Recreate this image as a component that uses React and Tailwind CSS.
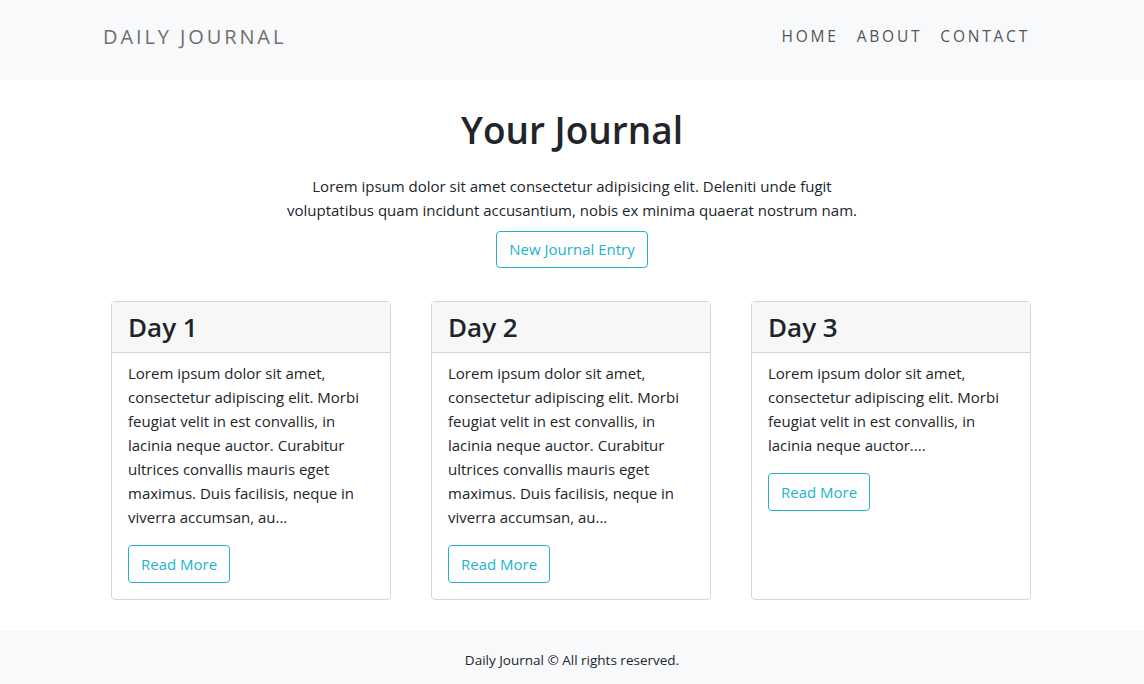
import React from "react";

const entries = [
  {
    title: "Day 1",
    body: "Lorem ipsum dolor sit amet, consectetur adipiscing elit. Morbi feugiat velit in est convallis, in lacinia neque auctor. Curabitur ultrices convallis mauris eget maximus. Duis facilisis, neque in viverra accumsan, au...",
  },
  {
    title: "Day 2",
    body: "Lorem ipsum dolor sit amet, consectetur adipiscing elit. Morbi feugiat velit in est convallis, in lacinia neque auctor. Curabitur ultrices convallis mauris eget maximus. Duis facilisis, neque in viverra accumsan, au...",
  },
  {
    title: "Day 3",
    body: "Lorem ipsum dolor sit amet, consectetur adipiscing elit. Morbi feugiat velit in est convallis, in lacinia neque auctor....",
  },
];

function NavBar() {
  return (
    <nav className="h-[80px] bg-[#f8f9fa]">
      <div className="mx-auto flex h-full w-[942px] items-center justify-between pb-[6px] pl-[2px] pr-[13px]">
        <a className="text-[20px] tracking-[0.145em] text-[#6f6f6f]">DAILY JOURNAL</a>
        <ul className="flex gap-[18px] text-[15.5px] tracking-[0.18em] text-[#555]">
          <li>HOME</li>
          <li>ABOUT</li>
          <li>CONTACT</li>
        </ul>
      </div>
    </nav>
  );
}

function EntryCard({ entry }) {
  return (
    <div className="flex w-[280px] flex-col rounded-[4px] border border-[#d6d6d6] bg-white">
      <div className="h-[51px] border-b border-[#d6d6d6] bg-[#f7f7f7] px-[16px] pt-[10px] text-[26px] leading-[30px] font-semibold text-[#212529]">
        {entry.title}
      </div>
      <div className="px-[16px] pb-[16px] pt-[8px]">
        <p className="text-[15px] leading-[24px] text-[#212529]">{entry.body}</p>
        <button className="mt-[16px] h-[38px] rounded-[4px] border border-[#22b3ca] px-[12px] text-[15px] text-[#22b3ca]">
          Read More
        </button>
      </div>
    </div>
  );
}

export default function App() {
  return (
    <div className="min-h-[684px] bg-white font-['Open_Sans',sans-serif] text-[#212529]">
      <NavBar />

      <main className="flex flex-col items-center pt-[26px]">
        <h1 className="text-[37px] leading-[48px] font-semibold">Your Journal</h1>
        <p className="mt-[20px] w-[580px] text-center text-[15px] leading-[24px]">
          Lorem ipsum dolor sit amet consectetur adipisicing elit. Deleniti unde fugit voluptatibus quam incidunt accusantium, nobis ex minima quaerat nostrum nam.
        </p>
        <button className="mt-[9px] h-[37px] rounded-[4px] border border-[#22b3ca] px-[12px] text-[15px] text-[#22b3ca]">
          New Journal Entry
        </button>

        <div className="mt-[33px] flex gap-[40px] pr-[2px]">
          {entries.map((entry) => (
            <EntryCard key={entry.title} entry={entry} />
          ))}
        </div>
      </main>

      <footer className="mt-[31px] flex h-[53px] items-center justify-center bg-[#f8f9fa] pt-[5px] text-[13.5px] text-[#212529]">
        Daily Journal © All rights reserved.
      </footer>
    </div>
  );
}
